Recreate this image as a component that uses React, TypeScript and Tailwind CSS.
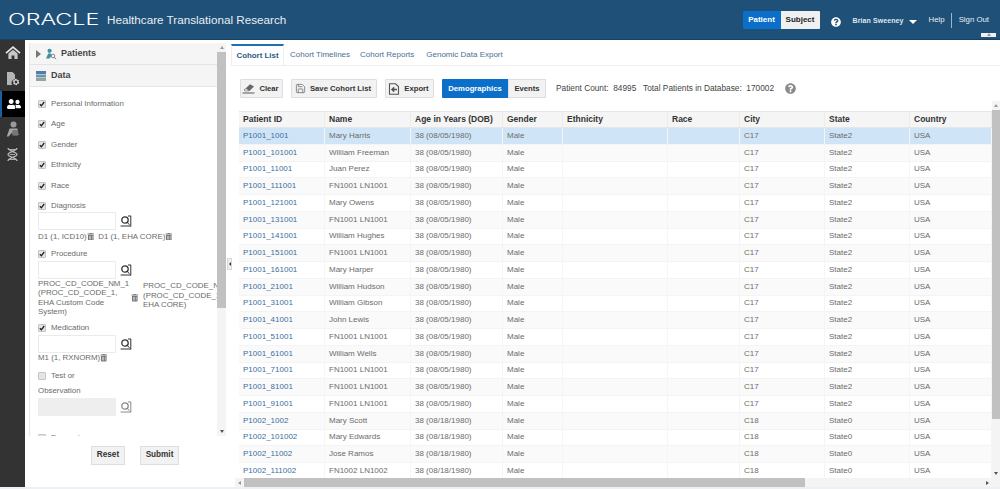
import { FaUserFriends, FaTrashAlt, FaQuestionCircle } from "react-icons/fa";
import { Save } from "lucide-react";

const columns = ["Patient ID", "Name", "Age in Years (DOB)", "Gender", "Ethnicity", "Race", "City", "State", "Country"];
const gridCols = "grid grid-cols-[86px_86px_92px_60px_105px_72px_85px_85px_82px]";

const patients = [
  ["P1001_1001", "Mary Harris"],
  ["P1001_101001", "William Freeman"],
  ["P1001_11001", "Juan Perez"],
  ["P1001_111001", "FN1001 LN1001"],
  ["P1001_121001", "Mary Owens"],
  ["P1001_131001", "FN1001 LN1001"],
  ["P1001_141001", "William Hughes"],
  ["P1001_151001", "FN1001 LN1001"],
  ["P1001_161001", "Mary Harper"],
  ["P1001_21001", "William Hudson"],
  ["P1001_31001", "William Gibson"],
  ["P1001_41001", "John Lewis"],
  ["P1001_51001", "FN1001 LN1001"],
  ["P1001_61001", "William Wells"],
  ["P1001_71001", "FN1001 LN1001"],
  ["P1001_81001", "FN1001 LN1001"],
  ["P1001_91001", "FN1001 LN1001"],
  ["P1002_1002", "Mary Scott"],
  ["P1002_101002", "Mary Edwards"],
  ["P1002_11002", "Jose Ramos"],
  ["P1002_111002", "FN1002 LN1002"],
];

const HomeIcon = () => (
  <svg width="16" height="14" viewBox="0 0 16 14">
    <path d="M1 7.2L8 1.2L15 7.2" fill="none" stroke="#e6e6e6" strokeWidth="1.7" />
    <path d="M3.4 7.6L8 3.8L12.6 7.6V13H9.4V9.4H6.6V13H3.4Z" fill="#c8c8c8" />
  </svg>
);

const FileGearIcon = () => (
  <svg width="14" height="15" viewBox="0 0 14 15">
    <path d="M1 1H6.5L9 3.5V8.2A3.6 3.6 0 0 0 6.2 14H1Z" fill="#b4b4b4" />
    <circle cx="10" cy="11" r="2.4" fill="none" stroke="#d8d8d8" strokeWidth="1.5" strokeDasharray="1.6 0.7" />
    <circle cx="10" cy="11" r="1.9" fill="none" stroke="#d8d8d8" strokeWidth="0.8" />
  </svg>
);

const PersonIcon = () => (
  <svg width="14" height="16" viewBox="0 0 14 16">
    <circle cx="7.5" cy="3.6" r="3" fill="#9a9a9a" />
    <path d="M3.6 7.4H11.4L12.6 14H7.4L6.2 11.4L2.6 15.4H0.8Z" fill="#a6a6a6" />
    <path d="M6.4 9H12V14.6H6.4Z" fill="#777" />
  </svg>
);

const HelixIcon = () => (
  <svg width="13" height="15" viewBox="0 0 13 15" fill="none" stroke="#b8b8b8">
    <path d="M2 1C2 4 11 5 11 7.5C11 10 2 11 2 14M11 1C11 4 2 5 2 7.5C2 10 11 11 11 14" strokeWidth="1.3" />
    <path d="M2.5 2.5H10.5M2.5 12.5H10.5M4 7.5H9" strokeWidth="0.9" />
  </svg>
);

const PatientsIcon = () => (
  <svg width="12" height="12" viewBox="0 0 12 12" fill="none">
    <circle cx="4.6" cy="2.8" r="2.1" fill="#3f93a3" />
    <path d="M1 10.6L3.2 5.6H6L6.6 7.4L4.6 10.6Z" fill="#3f93a3" />
    <circle cx="8" cy="8" r="1.8" stroke="#777" strokeWidth="0.9" />
    <path d="M9.3 9.4L11.2 11.2" stroke="#777" strokeWidth="1" />
  </svg>
);

const DataIcon = () => (
  <svg width="10" height="10" viewBox="0 0 10 10">
    <rect width="10" height="3" fill="#4f7fa8" />
    <rect y="3.5" width="10" height="3" fill="#6f93b0" />
    <rect y="7" width="10" height="3" fill="#8fa89a" />
  </svg>
);

const EraserIcon = () => (
  <svg width="13" height="11" viewBox="0 0 13 11">
    <path d="M2 7L8 1.2L12 3.4L7.4 8H3Z" fill="#666" />
    <path d="M2 7L4 5.2L7 7.6L6.4 8H3Z" fill="#ddd" stroke="#666" strokeWidth="0.5" />
    <path d="M0.5 10H12.5" stroke="#666" strokeWidth="1.1" />
  </svg>
);

const ExportIcon = () => (
  <svg width="12" height="12" viewBox="0 0 12 12" fill="none" stroke="#555">
    <path d="M1.5 0.8H7.5L10.5 3.6V11.2H1.5Z" strokeWidth="1.1" />
    <path d="M9 6.5H4.2M6.2 4.4L4 6.5L6.2 8.6" strokeWidth="1.5" />
  </svg>
);

const SearchBox = ({ disabled }: { disabled?: boolean }) => (
  <svg width="12" height="12" viewBox="0 0 12 12" fill="none" stroke={disabled ? "#8a8a8a" : "#333"} className="shrink-0">
    <circle cx="5" cy="5" r="3.2" strokeWidth="1.3" />
    <path d="M7.4 7.4L9.4 9.8M10.8 1v10.4M0.6 11h10.4M8 1h3" strokeWidth="1" />
  </svg>
);

const Check = ({ label, checked = true }: { label: string; checked?: boolean }) => (
  <div className="flex items-center gap-[5px] pl-[8px] h-[12px]">
    <span className="w-[8px] h-[8px] rounded-[1px] bg-[#e4e4e4] border border-[#c4c4c4] flex items-center justify-center shrink-0">
      {checked && (
        <svg width="6" height="6" viewBox="0 0 6 6" fill="none" stroke="#222" strokeWidth="1.3">
          <path d="M0.8 3.2L2.4 4.8L5.2 1" />
        </svg>
      )}
    </span>
    <span className="text-[7.9px] text-[#6b6b6b]">{label}</span>
  </div>
);

const LookupInput = ({ disabled }: { disabled?: boolean }) => (
  <div className="flex items-center gap-[4px]">
    <div className={`w-[78px] h-[18px] border ${disabled ? "bg-[#eeeeee] border-[#eeeeee]" : "bg-white border-[#e8ecef]"}`} />
    <SearchBox disabled={disabled} />
  </div>
);

const Trash = () => <FaTrashAlt className="text-[#777] text-[7.5px] shrink-0" />;

const ToolButton = ({ icon, label, width }: { icon: React.ReactNode; label: string; width: string }) => (
  <button className={`${width} h-[19px] pr-[2px] flex items-center justify-center gap-[4px] bg-[#f2f2f2] border border-[#dedede] rounded-[1px] text-[7.7px] font-bold text-[#333] whitespace-nowrap`}>
    {icon}
    {label}
  </button>
);

const RailIcon = ({ children, active }: { children: React.ReactNode; active?: boolean }) => (
  <div className={`h-[25.5px] flex items-center justify-center text-white ${active ? "bg-black border-l-2 border-[#1c5fa0]" : ""}`}>
    {children}
  </div>
);

const ArrowUp = () => <span className="w-0 h-0 border-x-[2px] border-x-transparent border-b-[3px] border-b-[#999]" />;
const ArrowDown = () => <span className="w-0 h-0 border-x-[2px] border-x-transparent border-t-[3px] border-t-[#555]" />;

export default function App() {
  return (
    <div className="w-[1000px] h-[489px] overflow-hidden bg-white flex flex-col font-['Liberation_Sans',Arial,sans-serif] relative">
      {/* header */}
      <header className="h-[40px] shrink-0 bg-[#1f5078] border-b border-[#16405f] flex items-center pl-[8px] pr-[11px] text-white">
        <span className="inline-block w-[91px] origin-left scale-x-[1.5] text-[15.5px] font-['Inter',sans-serif] font-light leading-none">ORACLE</span>
        <span className="ml-[8px] text-[11.7px] text-[#e8eef3]">Healthcare Translational Research</span>
        <div className="ml-auto flex items-center">
          <div className="flex h-[18px] mt-[1px] text-[8px] font-bold">
            <span className="w-[38px] bg-[#0b6fc9] flex items-center justify-center rounded-l-[1px]">Patient</span>
            <span className="w-[39px] bg-[#f0f0f0] text-[#222] flex items-center justify-center rounded-r-[1px]">Subject</span>
          </div>
          <FaQuestionCircle className="ml-[11px] mt-[5px] text-[10px] text-white" />
          <span className="ml-[12px] mt-[3px] text-[7px] font-bold text-[#dde6ee] tracking-[0.1px]">Brian Sweeney</span>
          <span className="ml-[5px] mt-[5px] w-0 h-0 border-x-[4px] border-x-transparent border-t-[4px] border-t-white" />
          <span className="ml-[12px] mt-[1px] text-[7.8px] text-[#e8eef3]">Help</span>
          <span className="ml-[6px] mt-[1px] h-[15px] w-px bg-[#9db5c9]" />
          <span className="ml-[7px] mt-[1px] text-[7.8px] text-[#e8eef3]">Sign Out</span>
        </div>
      </header>
      <div className="absolute left-[981px] top-[33px] w-[15px] h-[4px] bg-[#f0f0f0] flex justify-center">
        <ArrowUp />
      </div>

      <div className="flex-1 flex min-h-0 border-b-2 border-[#eef1f3]">
        {/* icon rail */}
        <nav className="w-[25px] shrink-0 bg-[#333333] flex flex-col">
          <RailIcon><HomeIcon /></RailIcon>
          <RailIcon><FileGearIcon /></RailIcon>
          <RailIcon active><FaUserFriends size={14} /></RailIcon>
          <RailIcon><PersonIcon /></RailIcon>
          <RailIcon><HelixIcon /></RailIcon>
        </nav>

        {/* left panel */}
        <aside className="w-[201px] shrink-0 flex flex-col pl-[4px] pt-[3px] relative">
          <div className="h-[393px] flex min-h-0">
            <div className="w-[188px] shrink-0 overflow-hidden border-l border-[#e8e8e8] flex flex-col">
              <div className="h-[22px] shrink-0 bg-[#f5f5f5] border-b border-[#e4e4e4] flex items-center pl-[6px] gap-[4px]">
                <span className="w-0 h-0 border-y-[4px] border-y-transparent border-l-[5px] border-l-[#777]" />
                <PatientsIcon />
                <span className="text-[9px] font-bold text-[#444]">Patients</span>
              </div>
              <div className="h-[22px] shrink-0 bg-[#f5f5f5] border-b border-[#e4e4e4] flex items-center pl-[6px] gap-[5px]">
                <DataIcon />
                <span className="text-[9px] font-bold text-[#444]">Data</span>
              </div>
              <div className="flex flex-col pt-[11px]">
                <div className="flex flex-col gap-[8.4px]">
                  <Check label="Personal Information" />
                  <Check label="Age" />
                  <Check label="Gender" />
                  <Check label="Ethnicity" />
                  <Check label="Race" />
                  <Check label="Diagnosis" />
                </div>
                <div className="pl-[8px]">
                  <LookupInput />
                  <div className="flex items-center gap-[4px] text-[7.9px] text-[#6b6b6b] h-[11px] mt-[1px] whitespace-nowrap">
                    <span className="flex items-center">D1 (1, ICD10)<Trash /></span>
                    <span className="flex items-center">D1 (1, EHA CORE)<Trash /></span>
                  </div>
                </div>
                <div className="mt-[6px]"><Check label="Procedure" /></div>
                <div className="pl-[8px] mt-[1px]">
                  <LookupInput />
                  <div className="flex items-center text-[7.9px] text-[#6b6b6b] leading-[9.4px] w-[240px]">
                    <span className="w-[88px] shrink-0">PROC_CD_CODE_NM_1 (PROC_CD_CODE_1, EHA Custom Code System)</span>
                    <span className="w-[17px] flex justify-center"><Trash /></span>
                    <span className="w-[90px] -mt-[5px]">PROC_CD_CODE_NM_1 (PROC_CD_CODE_1, EHA CORE)</span>
                  </div>
                </div>
                <div className="mt-[5px]"><Check label="Medication" /></div>
                <div className="pl-[8px] mt-[1px]">
                  <LookupInput />
                  <div className="flex items-center text-[7.9px] text-[#6b6b6b] h-[11px]">M1 (1, RXNORM)<Trash /></div>
                </div>
                <div className="mt-[6px]"><Check label="Test or" checked={false} /></div>
                <div className="pl-[8px] mt-[3px] text-[7.9px] text-[#6b6b6b] h-[12px]">Observation</div>
                <div className="pl-[8px] mt-[1px]"><LookupInput disabled /></div>
                <div className="mt-[16px]"><Check label="Encounter" checked={false} /></div>
              </div>
            </div>
            {/* panel scrollbar */}
            <div className="w-[9px] shrink-0 bg-[#f4f4f4] flex flex-col items-center">
              <span className="h-[9px] flex items-center"><ArrowUp /></span>
              <span className="w-full h-[256px] bg-[#c1c1c1]" />
              <span className="mt-auto h-[9px] flex items-center"><ArrowDown /></span>
            </div>
          </div>
          <div className="flex gap-[15px] mt-[10px] ml-[62px]">
            <button className="w-[34px] h-[19px] bg-[#f2f2f2] border border-[#dedede] text-[8.2px] font-bold text-[#333]">Reset</button>
            <button className="w-[39px] h-[19px] bg-[#f2f2f2] border border-[#dedede] text-[8.2px] font-bold text-[#333]">Submit</button>
          </div>
          <div className="absolute right-[-6px] top-[218px] w-[5px] h-[12px] bg-[#f0f0f0] border border-[#d8d8d8] flex items-center justify-center">
            <span className="w-0 h-0 border-y-[2px] border-y-transparent border-r-[2px] border-r-[#333]" />
          </div>
        </aside>

        {/* main */}
        <main className="flex-1 min-w-0 ml-[5px] flex flex-col pt-[4px]">
          <div className="h-[22px] shrink-0 flex items-stretch border-b border-[#eeeeee] text-[8px] text-[#4a6f8f]">
            <span className="w-[53px] border-t-2 border-[#1f6fb5] border-r border-r-[#eeeeee] border-l border-l-[#eeeeee] text-[7.9px] font-bold text-[#2c5a80] flex items-center justify-center">Cohort List</span>
            <span className="ml-[6px] flex items-center">Cohort Timelines</span>
            <span className="ml-[10px] flex items-center">Cohort Reports</span>
            <span className="ml-[12px] flex items-center">Genomic Data Export</span>
          </div>

          <div className="h-[19px] shrink-0 mt-[13px] ml-[9px] flex items-center">
            <ToolButton width="w-[43px]" icon={<EraserIcon />} label="Clear" />
            <span className="w-[8px]" />
            <ToolButton width="w-[86px]" icon={<Save size={11} strokeWidth={1.4} className="text-[#555]" />} label="Save Cohort List" />
            <span className="w-[8px]" />
            <ToolButton width="w-[49px]" icon={<ExportIcon />} label="Export" />
            <span className="w-[8px]" />
            <span className="w-[66px] h-full bg-[#0b6fc9] text-white text-[7.7px] font-bold flex items-center justify-center rounded-l-[1px]">Demographics</span>
            <span className="w-[38px] h-full bg-[#f2f2f2] border border-[#dedede] text-[#333] text-[7.7px] font-bold flex items-center justify-center">Events</span>
            <span className="ml-[10px] text-[8.3px] text-[#444] whitespace-nowrap">Patient Count:&nbsp; 84995 &nbsp; Total Patients in Database:&nbsp; 170002</span>
            <FaQuestionCircle size={11} className="ml-[11px] text-[#8a8a8a]" />
          </div>

          <div className="flex-1 min-h-0 mt-[3px] flex flex-col ml-[4px]">
            <div className="flex-1 min-h-0 flex">
              <div className="w-[757px] shrink-0 overflow-hidden pt-[10px] pl-[4px]">
                <div className={`${gridCols} h-[17px] bg-[#f5f5f5] border-y border-[#e6e6e6] text-[8.5px] font-bold text-[#333]`}>
                  {columns.map((c) => (
                    <div key={c} className="px-[4px] flex items-center border-r border-[#ececec] whitespace-nowrap">{c}</div>
                  ))}
                </div>
                {patients.map(([id, name], i) => {
                  const second = id.startsWith("P1002");
                  const cells = [id, name, second ? "38 (08/18/1980)" : "38 (08/05/1980)", "Male", "", "", second ? "C18" : "C17", second ? "State0" : "State2", "USA"];
                  return (
                    <div key={id} className={`${gridCols} h-[16.75px] border-b border-[#f4f4f4] text-[8px] text-[#6b6b6b] ${i === 0 ? "bg-[#cfe5f7]" : i % 2 ? "bg-[#fafafa]" : "bg-white"}`}>
                      {cells.map((c, j) => (
                        <div key={j} className={`px-[4px] flex items-center border-r border-[#f5f5f5] whitespace-nowrap ${j === 0 ? "text-[#3b6e9e]" : ""}`}>{c}</div>
                      ))}
                    </div>
                  );
                })}
              </div>
              <div className="w-[8px] shrink-0 bg-[#f4f4f4] flex flex-col items-center">
                <span className="h-[9px] flex items-center"><ArrowUp /></span>
                <span className="w-full h-[309px] bg-[#c1c1c1]" />
                <span className="mt-auto h-[9px] flex items-center"><ArrowDown /></span>
              </div>
            </div>
            <div className="h-[9px] shrink-0 bg-[#f4f4f4] flex items-center">
              <span className="w-[9px] flex justify-center"><span className="w-0 h-0 border-y-[2px] border-y-transparent border-r-[3px] border-r-[#999]" /></span>
              <span className="w-[561px] h-full bg-[#c1c1c1]" />
              <span className="ml-[178px] w-[9px] flex justify-center"><span className="w-0 h-0 border-y-[2px] border-y-transparent border-l-[3px] border-l-[#555]" /></span>
            </div>
          </div>
        </main>
      </div>
    </div>
  );
}
